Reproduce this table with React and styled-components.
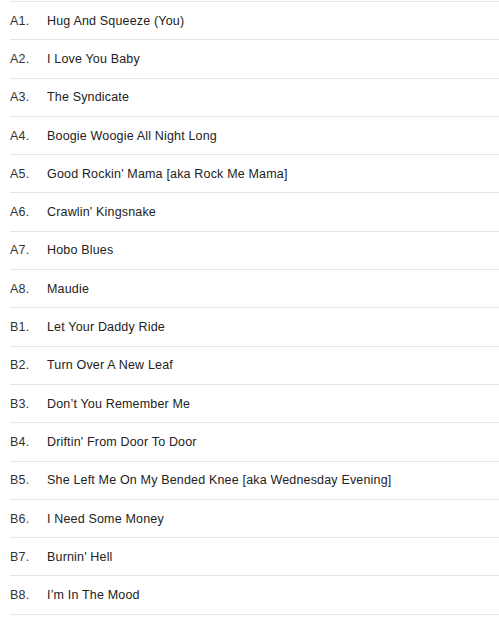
import React from 'react';
import styled, { createGlobalStyle } from 'styled-components';

const GlobalStyle = createGlobalStyle`
  html, body {
    margin: 0;
    padding: 0;
    background: #fff;
  }
  body {
    font-family: 'Liberation Sans', Arial, sans-serif;
    -webkit-font-smoothing: antialiased;
  }
`;

const TrackList = styled.ol`
  list-style: none;
  margin: 1px 0 0 10px;
  padding: 0;
  border-bottom: 1px solid #e1e6e6;
`;

const TrackRow = styled.li`
  display: flex;
  align-items: center;
  border-top: 1px solid #e1e6e6;
  height: 37.31px;
  font-size: 12.5px;
  line-height: 16px;
  color: #2a2a2a;
  letter-spacing: 0.17px;
`;

const Position = styled.span`
  width: 37px;
  flex-shrink: 0;
  color: #333;
`;

const Title = styled.span`
  color: #222;
`;

const tracks = [
  ['A1.', 'Hug And Squeeze (You)'],
  ['A2.', 'I Love You Baby'],
  ['A3.', 'The Syndicate'],
  ['A4.', 'Boogie Woogie All Night Long'],
  ['A5.', "Good Rockin' Mama [aka Rock Me Mama]"],
  ['A6.', "Crawlin' Kingsnake"],
  ['A7.', 'Hobo Blues'],
  ['A8.', 'Maudie'],
  ['B1.', 'Let Your Daddy Ride'],
  ['B2.', 'Turn Over A New Leaf'],
  ['B3.', 'Don\u2019t You Remember Me'],
  ['B4.', "Driftin' From Door To Door"],
  ['B5.', 'She Left Me On My Bended Knee [aka Wednesday Evening]'],
  ['B6.', 'I Need Some Money'],
  ['B7.', "Burnin' Hell"],
  ['B8.', 'I\u2019m In The Mood'],
];

const App = () => (
  <>
    <GlobalStyle />
    <TrackList>
      {tracks.map(([pos, title]) => (
        <TrackRow key={pos}>
          <Position>{pos}</Position>
          <Title>{title}</Title>
        </TrackRow>
      ))}
    </TrackList>
  </>
);

export default App;
